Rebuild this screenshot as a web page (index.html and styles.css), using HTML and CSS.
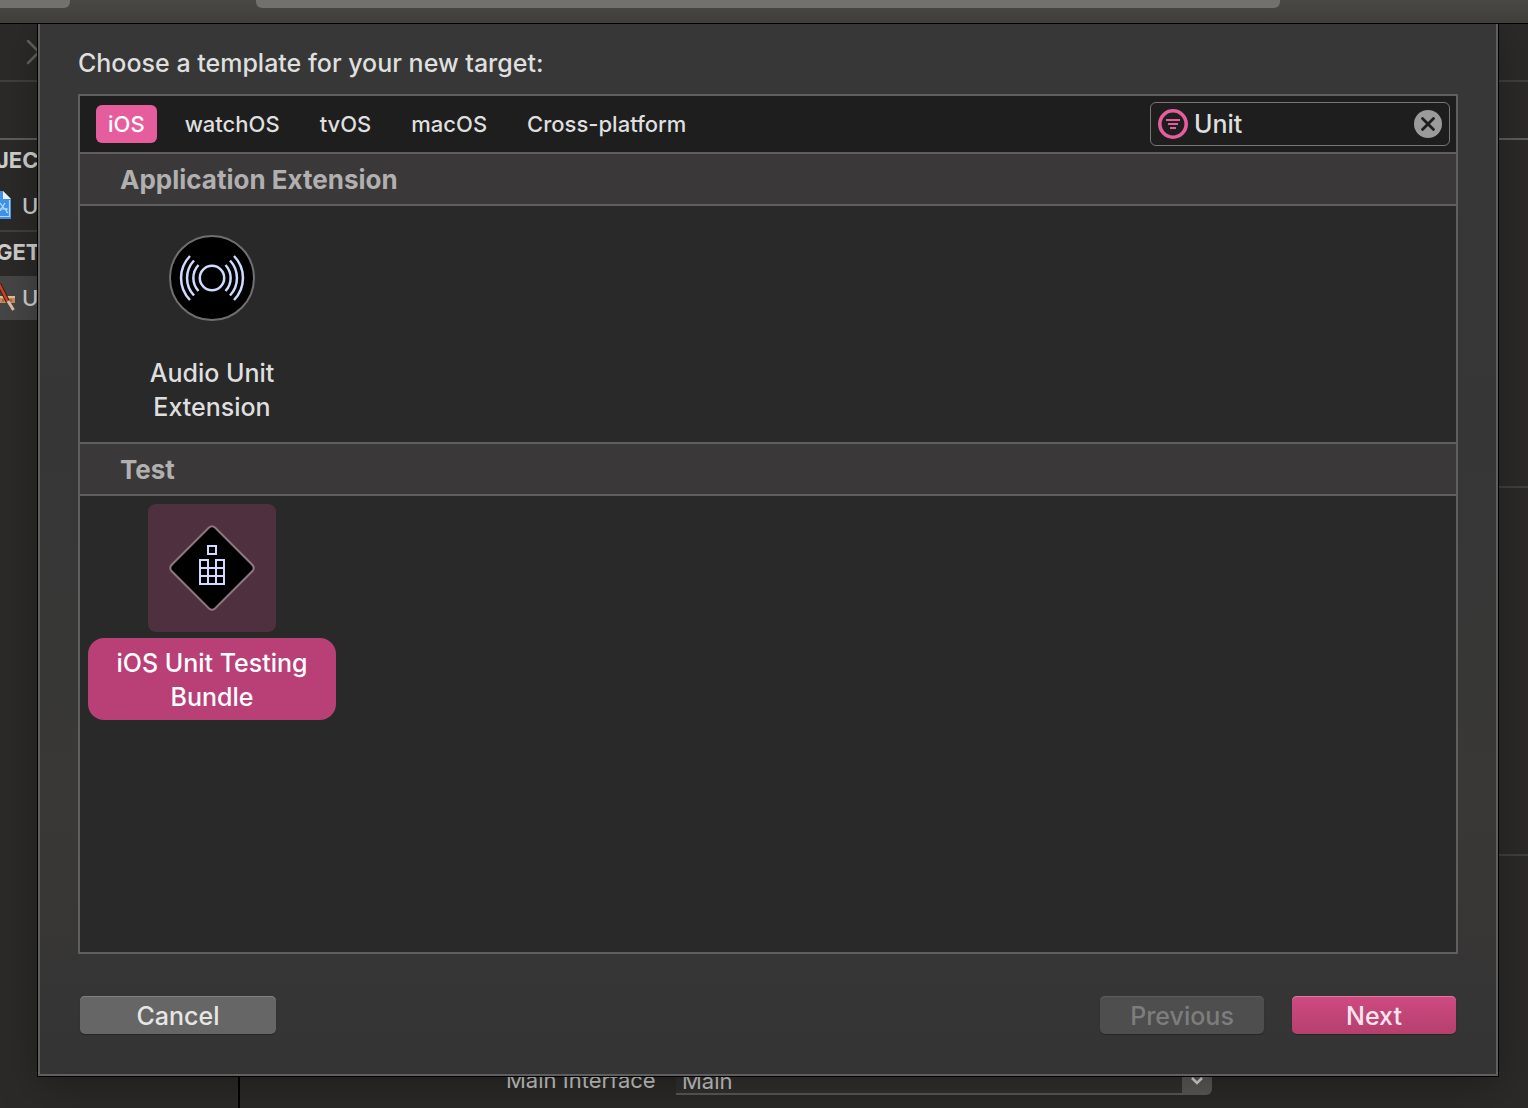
FILE: index.html
```html
<!DOCTYPE html>
<html lang="en">
<head>
<meta charset="utf-8">
<title>New target</title>
<link rel="stylesheet" href="styles.css">
</head>
<body>
<header class="toolbar">
  <div class="toolbar-scheme"></div>
  <div class="toolbar-status"></div>
</header>
<div class="workspace">
  <aside class="sidebar">
    <div class="jump-bar">
      <svg class="jump-icon" width="16" height="26" viewBox="0 0 16 26"><path d="M2 2l11 11L2 24" fill="none" stroke="#62615f" stroke-width="2.5" stroke-linecap="round"/></svg>
    </div>
    <div class="tab-strip"></div>
    <section class="nav-group">
      <h2 class="nav-heading">JEC</h2>
      <div class="nav-row">
        <svg width="12" height="30" viewBox="0 0 12 30"><path d="M0 0h3l8 8v20H0z" fill="#3f94ef"/><path d="M3 0l8 8H3z" fill="#f1f6fb"/><path d="M0 25.500h9.500V9M0 12l8 10M0 18h8M0 20l5-8M6 17l1 5" fill="none" stroke="#b9dcff" stroke-width="1.200"/></svg>
        <span>U</span>
      </div>
    </section>
    <section class="nav-group">
      <h2 class="nav-heading">GET</h2>
      <div class="nav-row nav-row-selected">
        <svg width="16" height="30" viewBox="0 0 16 30"><path d="M0 13h15v7H0z" fill="#c48f5c"/><path d="M0 14h15" stroke="#e9bf8d" stroke-width="2"/><path d="M3 16v3M7 16v3M11 16v3" stroke="#7d532e"/><path d="M-1 1l9 18" stroke="#4a1710" stroke-width="4.500"/><path d="M-1 1l9 18" stroke="#c4472c" stroke-width="2.500"/><path d="M8 18l5.500 9" stroke="#e3bfa8" stroke-width="3"/></svg>
        <span>U</span>
      </div>
    </section>
  </aside>
  <main class="editor">
    <div class="jump-bar"></div>
    <div class="tab-strip"></div>
    <section class="editor-section"></section>
    <section class="editor-section editor-section-tall"></section>
    <section class="editor-form">
      <label class="form-label" for="interface">Main Interface</label>
      <div class="combo">
        <select class="combo-select" id="interface"><option>Main</option></select>
        <span class="combo-arrow"><svg width="14" height="9" viewBox="0 0 14 9"><path d="M2 2l5 5 5-5" fill="none" stroke="#d8d8d6" stroke-width="2.500"/></svg></span>
      </div>
    </section>
  </main>
</div>

<div class="sheet" role="dialog" aria-labelledby="sheet-title">
  <h1 class="sheet-title" id="sheet-title">Choose a template for your new target:</h1>
  <div class="chooser">
    <div class="filter-bar">
      <nav class="platforms">
        <button class="platform platform-active" type="button">iOS</button>
        <button class="platform" type="button">watchOS</button>
        <button class="platform" type="button">tvOS</button>
        <button class="platform" type="button">macOS</button>
        <button class="platform" type="button">Cross-platform</button>
      </nav>
      <div class="search">
        <svg width="30" height="30" viewBox="0 0 30 30"><circle cx="15" cy="15" r="13.200" fill="none" stroke="#e55d9d" stroke-width="3.600"/><path d="M8 11h14M10 15h10M12 19h6" stroke="#e55d9d" stroke-width="2"/></svg>
        <input class="search-input" type="text" value="Unit" aria-label="Filter">
        <button class="search-clear" type="button" aria-label="Clear">
          <svg width="28" height="28" viewBox="0 0 28 28"><circle cx="14" cy="14" r="14" fill="#9b9b9b"/><path d="M8.500 8.500l11 11M19.500 8.500l-11 11" stroke="#1e1e1e" stroke-width="2.800" stroke-linecap="round"/></svg>
        </button>
      </div>
    </div>
    <h2 class="group-heading">Application Extension</h2>
    <div class="templates">
      <button class="template" type="button">
        <span class="template-icon">
          <svg width="88" height="88" viewBox="0 0 88 88"><circle cx="44" cy="44" r="42" fill="#000" stroke="#6f6f6f" stroke-width="2"/><g fill="none" stroke="#cfdcff" stroke-width="2.500"><circle cx="44" cy="44" r="12.200"/><path d="M30.500 31a19 19 0 0 0 0 26M26 26.500a25.500 25.500 0 0 0 0 35M22 22a31.500 31.500 0 0 0 0 44M57.500 31a19 19 0 0 1 0 26M62 26.500a25.500 25.500 0 0 1 0 35M66 22a31.500 31.500 0 0 1 0 44"/></g></svg>
        </span>
        <span class="template-name">Audio Unit<br>Extension</span>
      </button>
    </div>
    <h2 class="group-heading">Test</h2>
    <div class="templates templates-last">
      <button class="template template-selected" type="button">
        <span class="template-icon">
          <svg width="88" height="88" viewBox="0 0 88 88"><path d="M41 3.500q3-2.500 6 0L84.500 41q2.500 3 0 6L47 84.500q-3 2.500-6 0L3.500 47q-2.500-3 0-6z" fill="#000" stroke="#8f7780" stroke-width="2"/><g fill="none" stroke="#cfdcff" stroke-width="2"><path d="M40 22h8v8h-8zM32 36h8v24h-8zM48 36h8v24h-8zM32 44h24M32 52h24M40 60h8"/></g></svg>
        </span>
        <span class="template-name">iOS Unit Testing<br>Bundle</span>
      </button>
    </div>
  </div>
  <footer class="sheet-actions">
    <button class="action action-cancel" type="button">Cancel</button>
    <button class="action" type="button" disabled>Previous</button>
    <button class="action action-primary" type="button">Next</button>
  </footer>
</div>
</body>
</html>
```

FILE: styles.css
```css
* { box-sizing: border-box; }

body {
  margin: 0;
  min-height: 100vh;
  display: flex;
  flex-direction: column;
  position: relative;
  overflow: hidden;
  background: #2b2a28;
  color: #dfdfdf;
  font-family: Inter, "Liberation Sans", sans-serif;
  font-size: 25px;
  font-weight: 500;
}

h1, h2 { margin: 0; }

button, input, select {
  margin: 0;
  padding: 0;
  border: 0;
  background: none;
  color: inherit;
  font: inherit;
}

svg { display: block; flex: none; }

/* Window behind the sheet */
.toolbar {
  height: 24px;
  display: flex;
  align-items: flex-start;
  gap: 186px;
  padding-right: 248px;
  background: linear-gradient(#494845, #403f3c);
  border-bottom: 1px solid #000;
}

.toolbar-scheme, .toolbar-status {
  height: 8px;
  background: #72716e;
}

.toolbar-scheme { width: 70px; border-radius: 0 0 6px 0; }
.toolbar-status { flex: 1; border-radius: 0 0 6px 6px; }

.workspace {
  flex: 1;
  display: flex;
  font-size: 22px;
}

.sidebar {
  width: 240px;
  border-right: 2px solid #000;
}

.jump-bar {
  height: 58px;
  display: flex;
  align-items: center;
  padding-left: 26px;
  border-bottom: 2px solid #41403e;
}

.tab-strip {
  height: 58px;
  border-bottom: 2px solid #5f5e5d;
}

.nav-group {
  padding-bottom: 2px;
  border-bottom: 2px solid #41403e;
}

.nav-group:last-child { border-bottom: 0; }

.nav-heading {
  margin-left: -4px;
  font-size: 22px;
  font-weight: 700;
  line-height: 40px;
  padding-bottom: 4px;
  color: #d0d0cf;
}

.nav-row {
  height: 44px;
  display: grid;
  grid-template-columns: 22px 1fr;
  align-items: center;
  color: #d0d0cf;
}

.nav-row-selected { background: #464646; }

.editor {
  flex: 1;
  display: flex;
  flex-direction: column;
}

.editor-section {
  height: 348px;
  border-bottom: 2px solid #41403e;
}

.editor-section-tall { height: 368px; }

.editor-form {
  flex: 1;
  display: flex;
  align-items: flex-start;
  gap: 20px;
  padding: 204px 316px 0 266px;
  font-weight: 400;
}

.form-label {
  width: 150px;
  flex: none;
  line-height: 40px;
  white-space: nowrap;
  color: #c8c8c7;
}

.combo {
  flex: 1;
  height: 35px;
  display: flex;
}

.combo-select {
  flex: 1;
  appearance: none;
  padding: 8px 6px 0;
  background: #31302e;
  border-bottom: 2px solid #5a5957;
  color: #c8c8c7;
}

.combo-arrow {
  width: 30px;
  display: flex;
  align-items: center;
  justify-content: center;
  padding-top: 6px;
  background: #5a5957;
  border-radius: 0 6px 6px 0;
}

/* Template sheet, hanging from the toolbar */
.sheet {
  position: absolute;
  top: 24px;
  left: 38px;
  right: 30px;
  padding: 0 38px 40px;
  border: 2px solid #5f5f5f;
  border-top: 0;
  background: linear-gradient(#383737, #363636 40%, #393837 75%, #353434);
  box-shadow: 0 0 0 1px #000, 0 10px 40px rgba(0, 0, 0, 0.3);
  clip-path: inset(0 -80px -80px);
}

.sheet-title {
  font-size: 25px;
  font-weight: 500;
  line-height: 30px;
  padding: 24px 0 16px;
}

.chooser {
  border: 2px solid #5f5f5f;
  background: #292929;
}

.filter-bar {
  height: 56px;
  display: flex;
  align-items: center;
  justify-content: space-between;
  padding: 0 6px 0 16px;
  background: #1e1e1e;
}

.platforms {
  display: flex;
  gap: 16px;
}

.platform {
  height: 38px;
  padding: 0 12px;
  border-radius: 6px;
  font-size: 22px;
}

.platform-active {
  background: #e55d9d;
  color: #fff;
}

.search {
  width: 300px;
  height: 44px;
  display: flex;
  align-items: center;
  gap: 6px;
  padding: 0 7px;
  border: 1px solid #777;
  border-radius: 6px;
}

.search-input {
  flex: 1;
  min-width: 0;
  outline: 0;
}

.group-heading {
  height: 54px;
  padding-left: 40px;
  border: solid #5f5f5f;
  border-width: 2px 0;
  background: #3a3838;
  color: #b1afb0;
  font-size: 26px;
  font-weight: 700;
  line-height: 52px;
}

.templates {
  display: flex;
  padding: 8px 8px 12px;
}

.templates-last { min-height: 456px; }

.template {
  width: 248px;
  display: flex;
  flex-direction: column;
  align-items: center;
  gap: 6px;
}

.template-icon {
  width: 128px;
  height: 128px;
  display: flex;
  align-items: center;
  justify-content: center;
  border-radius: 8px;
}

.template-name {
  align-self: stretch;
  padding: 8px 0 6px;
  border-radius: 16px;
  line-height: 34px;
}

.template-selected .template-icon { background: #4f303e; }

.template-selected .template-name {
  background: #b93f77;
  color: #fff;
}

.sheet-actions {
  display: flex;
  gap: 28px;
  padding: 42px 2px 0;
}

.action {
  width: 164px;
  height: 38px;
  padding-top: 2px;
  border-radius: 5px;
  background: #4e4e4e;
  box-shadow: inset 0 1px #5c5c5c, 0 1px 1px rgba(0, 0, 0, 0.3);
  color: #7d7d7d;
}

.action-cancel {
  width: 196px;
  margin-right: auto;
  background: #666;
  box-shadow: inset 0 1px #808080, 0 1px 1px rgba(0, 0, 0, 0.3);
  color: #e6e6e6;
}

.action-primary {
  background: linear-gradient(#cf4a81, #b5406d);
  box-shadow: inset 0 1px #dd7aa2, 0 1px 1px rgba(0, 0, 0, 0.3);
  color: #fbe6ef;
}
```
